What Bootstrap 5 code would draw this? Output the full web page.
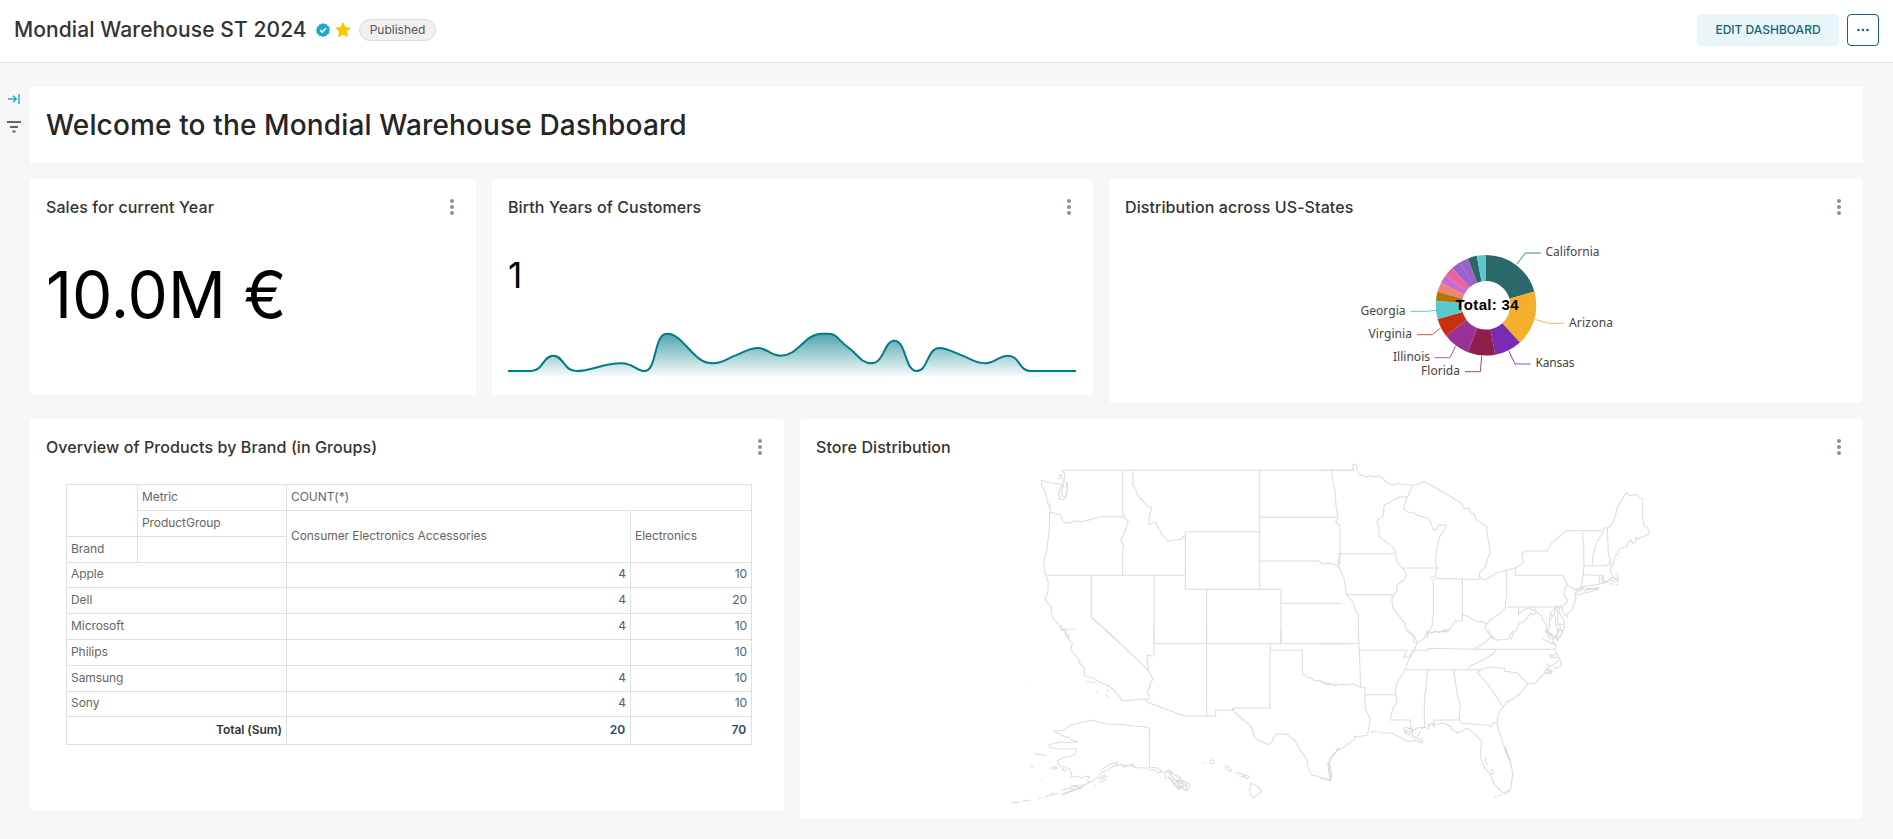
<!DOCTYPE html>
<html lang="en">
<head>
<meta charset="utf-8">
<meta name="viewport" content="width=device-width, initial-scale=1">
<title>Mondial Warehouse ST 2024</title>
<link href="https://cdn.jsdelivr.net/npm/bootstrap@5.3.0/dist/css/bootstrap.min.css" rel="stylesheet">
<style>
body{font-family:Inter,"Liberation Sans",sans-serif;background:#f7f7f7;color:#333;height:839px;overflow:hidden}
.topbar{height:63px;border-bottom:1px solid #e0e0e0;padding:0 14px 2px}
.topbar h1{font-size:21px;font-weight:500;line-height:28px;letter-spacing:.09px}
.status{font-size:12px;line-height:20px;height:22px;padding:0 10px;background:#f0f0f0;border:1px solid #dcdcdc;color:#555}
.btn-edit{width:142px;height:32px;padding:0;font-size:12px;font-weight:500;background:#e9f6f9;color:#156378;border:0;border-radius:4px}
.btn-more{width:32px;height:32px;padding:0;border:1px solid #156378;border-radius:4px}
.rail{width:30px;padding:6px 0 0 7px;margin-top:24px;gap:16px}
.board{padding:24px 30px 0 0;gap:16px}
.panel{background:#fff;border-radius:4px;min-width:0}
.banner{height:76px;background:#fff;padding:0 16px}
.banner h2{font-size:28px;font-weight:500;line-height:76px;color:#252525;letter-spacing:.14px}
.w-sales{width:446px;height:216px}.w-birth{width:601px;height:216px}.w-states{height:224px}
.w-brand{width:754px;height:392px}.w-map{height:400px}
.phead{height:41px;padding:15px 22px 0 16px}
.phead h3{font-size:16px;font-weight:500;line-height:26px;letter-spacing:.09px}
.big{font-size:64px;line-height:70px;color:#000;padding:40px 16px 0}
.mid{font-size:35px;line-height:40px;color:#000;padding:35px 16px 0}
.pivot{width:685px;table-layout:fixed;border-collapse:collapse;font-size:12px;line-height:16px;letter-spacing:-.06px;margin:24px 0 0 36px}
.pivot td,.pivot th{border:1px solid #e0e0e0;padding:0 4px 2px;font-weight:400;vertical-align:middle;color:#666}
.pivot tr{height:26px}.pivot tr.low{height:25px}
.pivot td{text-align:right;color:#4d607c}
.pivot tr.sum{height:28px}.pivot tr.sum td{font-weight:600;color:#2a4a66;padding-right:5px}.pivot tr.sum th{font-weight:600;color:#333}
.map g{fill:none;stroke:#dcdcdc;stroke-width:3.2;stroke-linejoin:round}
.lbl{font:12px "Noto Sans","Open Sans",sans-serif;fill:#444}
.total{font:bold 15px "Liberation Sans",sans-serif}
</style>
</head>
<body>
<svg class="d-none"><symbol id="kebab" viewBox="0 0 4 16"><g fill="#879399"><circle cx="2" cy="2" r="2"/><circle cx="2" cy="8" r="2"/><circle cx="2" cy="14" r="2"/></g></symbol></svg>
<header class="topbar bg-white d-flex align-items-center">
  <h1 class="mb-0 text-nowrap">Mondial Warehouse ST 2024</h1>
  <svg class="ms-2" width="16" height="16" viewBox="0 0 16 16"><path fill="#20a7c9" d="M8 1l1.700 1.200 2-.2.8 1.900 1.900.8-.2 2L15.200 8l-1.200 1.500.2 2-1.900.8-.8 1.900-2-.2L8 15.200 6.300 14l-2 .2-.8-1.900-1.900-.8.2-2L.8 8 2 6.700l-.2-2 1.900-.8.8-1.900 2 .2z"/><path d="M5.200 8.100l2 2 3.700-3.800" fill="none" stroke="#fff" stroke-width="1.500"/></svg>
  <svg class="ms-1" width="16" height="16" viewBox="0 0 16 16"><path fill="#fcc700" stroke="#fcc700" stroke-linejoin="round" d="M8 .9l2.100 4.500 4.900.7-3.500 3.500.8 5L8 12.200l-4.300 2.400.8-5L1 6.100l4.900-.7z"/></svg>
  <span class="status rounded-pill ms-2">Published</span>
  <div class="ms-auto d-flex gap-2">
    <button class="btn btn-edit">EDIT DASHBOARD</button>
    <button class="btn btn-more d-flex align-items-center justify-content-center"><svg width="12" height="4" viewBox="0 0 12 4" fill="#156378"><circle cx="1.500" cy="2" r="1.300"/><circle cx="6" cy="2" r="1.300"/><circle cx="10.500" cy="2" r="1.300"/></svg></button>
  </div>
</header>
<main class="d-flex">
  <aside class="rail flex-shrink-0 d-flex flex-column">
    <svg width="14" height="12" viewBox="0 0 14 12" fill="none" stroke="#20a7c9" stroke-width="1.400"><path d="M1 6h8M6 2.800L9.200 6 6 9.200M12 1v10"/></svg>
    <svg width="14" height="12" viewBox="0 0 14 12" fill="none" stroke="#666" stroke-width="2"><path d="M0 1h14M3 6h8M5.500 10.500h3"/></svg>
  </aside>
  <div class="board flex-grow-1 d-flex flex-column">
    <section class="banner"><h2 class="mb-0">Welcome to the Mondial Warehouse Dashboard</h2></section>
    <div class="d-flex gap-3 align-items-start">
      <section class="panel w-sales">
        <div class="phead d-flex justify-content-between align-items-center"><h3 class="mb-0">Sales for current Year</h3><svg width="4" height="16"><use href="#kebab"/></svg></div>
        <div class="big">10.0M €</div>
      </section>
      <section class="panel w-birth">
        <div class="phead d-flex justify-content-between align-items-center"><h3 class="mb-0">Birth Years of Customers</h3><svg width="4" height="16"><use href="#kebab"/></svg></div>
        <div class="mid">1</div>
        <svg class="d-block ms-3" width="568" height="83" viewBox="69 345 1391 249" preserveAspectRatio="none">
          <defs><linearGradient id="fade" x1="0" y1="459" x2="0" y2="594" gradientUnits="userSpaceOnUse"><stop stop-color="#007b87" stop-opacity=".7"/><stop offset="1" stop-color="#007b87" stop-opacity="0"/></linearGradient></defs>
          <path fill="url(#fade)" d="M69 573H125C155 573 155 527 180 527S205 573 236 573C275 573 300 550 347 550C375 550 385 573 403 573C435 573 425 459 458 459C500 459 520 550 570 550C595 550 605 536 625 527C650 515 660 504 681 504C705 504 710 527 737 527C780 527 795 459 838 459H855C875 459 880 485 904 504C925 523 935 550 959 550C990 550 990 482 1015 482C1045 482 1040 573 1070 573C1098 573 1095 504 1126 504C1145 504 1162 518 1182 527S1215 550 1238 550C1262 550 1270 527 1293 527C1322 527 1320 573 1348 573H1460V594H69z"/>
          <path fill="none" stroke="#007b87" stroke-width="2" vector-effect="non-scaling-stroke" d="M69 573H125C155 573 155 527 180 527S205 573 236 573C275 573 300 550 347 550C375 550 385 573 403 573C435 573 425 461 458 461C500 461 520 550 570 550C595 550 605 536 625 527C650 515 660 504 681 504C705 504 710 527 737 527C780 527 795 461 838 461H855C875 461 880 485 904 504C925 523 935 550 959 550C990 550 990 482 1015 482C1045 482 1040 573 1070 573C1098 573 1095 504 1126 504C1145 504 1162 518 1182 527S1215 550 1238 550C1262 550 1270 527 1293 527C1322 527 1320 573 1348 573H1460"/>
        </svg>
      </section>
      <section class="panel w-states flex-grow-1">
        <div class="phead d-flex justify-content-between align-items-center"><h3 class="mb-0">Distribution across US-States</h3><svg width="4" height="16"><use href="#kebab"/></svg></div>
        <svg class="d-block" width="754" height="183" viewBox="1109 220 754 183">
          <g transform="translate(1486 305.300) rotate(-90)" fill="none" stroke-width="26">
            <circle r="37.300" pathLength="34" stroke="#2a686a" stroke-dasharray="7 27"/>
            <circle r="37.300" pathLength="34" stroke="#f4b02a" stroke-dasharray="6 28" stroke-dashoffset="-7"/>
            <circle r="37.300" pathLength="34" stroke="#7a2bb1" stroke-dasharray="3 31" stroke-dashoffset="-13"/>
            <circle r="37.300" pathLength="34" stroke="#901e4d" stroke-dasharray="3 31" stroke-dashoffset="-16"/>
            <circle r="37.300" pathLength="34" stroke="#9c3195" stroke-dasharray="3 31" stroke-dashoffset="-19"/>
            <circle r="37.300" pathLength="34" stroke="#c5300f" stroke-dasharray="2 32" stroke-dashoffset="-22"/>
            <circle r="37.300" pathLength="34" stroke="#5ac9cd" stroke-dasharray="2 32" stroke-dashoffset="-24"/>
            <circle r="37.300" pathLength="34" stroke="#b37400" stroke-dasharray="1 33" stroke-dashoffset="-26"/>
            <circle r="37.300" pathLength="34" stroke="#f1836c" stroke-dasharray="1 33" stroke-dashoffset="-27"/>
            <circle r="37.300" pathLength="34" stroke="#c96bcc" stroke-dasharray="1 33" stroke-dashoffset="-28"/>
            <circle r="37.300" pathLength="34" stroke="#e8649f" stroke-dasharray="1 33" stroke-dashoffset="-29"/>
            <circle r="37.300" pathLength="34" stroke="#9b62cc" stroke-dasharray="2 32" stroke-dashoffset="-30"/>
            <circle r="37.300" pathLength="34" stroke="#b184d8" stroke-dasharray=".06 33.940" stroke-dashoffset="-30.970"/>
            <circle r="37.300" pathLength="34" stroke="#2a686a" stroke-dasharray="1 33" stroke-dashoffset="-32"/>
            <circle r="37.300" pathLength="34" stroke="#5ac9cd" stroke-dasharray="1 33" stroke-dashoffset="-16" transform="rotate(180)"/>
          </g>
          <g fill="none" transform="translate(1330 220) scale(.33333)" stroke-width="3">
            <path stroke="#4b7f81" d="M560 133l26-34h46"/><path stroke="#f4b84a" d="M614 298l42 12h46"/><path stroke="#8a48bf" d="M536 392l19 40h46"/><path stroke="#a84871" d="M455 407l-4 48h-46"/><path stroke="#b457ae" d="M377 378l-17 35h-46"/><path stroke="#cf5539" d="M332 324l-25 20h-46"/><path stroke="#5ac9cd" d="M318 271l-28 3h-48"/>
          </g>
          <g class="lbl"><text x="1545.500" y="256" textLength="54">California</text><text x="1569" y="327" textLength="44">Arizona</text><text x="1535.500" y="367" textLength="39">Kansas</text><text x="1421" y="375" textLength="39">Florida</text><text x="1393" y="361" textLength="37">Illinois</text><text x="1368.500" y="338" textLength="43.500">Virginia</text><text x="1360.500" y="315" textLength="45">Georgia</text></g>
          <text class="total" x="1455.500" y="310" textLength="63" fill="#000">Total: 34</text>
        </svg>
      </section>
    </div>
    <div class="d-flex gap-3 align-items-start">
      <section class="panel w-brand">
        <div class="phead d-flex justify-content-between align-items-center"><h3 class="mb-0">Overview of Products by Brand (in Groups)</h3><svg width="4" height="16"><use href="#kebab"/></svg></div>
        <table class="pivot">
          <colgroup><col style="width:71px"><col style="width:149px"><col style="width:344px"><col style="width:121px"></colgroup>
          <tr><th rowspan="2"></th><th>Metric</th><th colspan="2">COUNT(*)</th></tr>
          <tr><th>ProductGroup</th><th rowspan="2">Consumer Electronics Accessories</th><th rowspan="2">Electronics</th></tr>
          <tr><th>Brand</th><th></th></tr>
          <tr class="low"><th colspan="2">Apple</th><td>4</td><td>10</td></tr>
          <tr><th colspan="2">Dell</th><td>4</td><td>20</td></tr>
          <tr><th colspan="2">Microsoft</th><td>4</td><td>10</td></tr>
          <tr><th colspan="2">Philips</th><td></td><td>10</td></tr>
          <tr><th colspan="2">Samsung</th><td>4</td><td>10</td></tr>
          <tr class="low"><th colspan="2">Sony</th><td>4</td><td>10</td></tr>
          <tr class="sum"><th colspan="2" class="text-end">Total (Sum)</th><td>20</td><td>70</td></tr>
        </table>
      </section>
      <section class="panel w-map flex-grow-1">
        <div class="phead d-flex justify-content-between align-items-center"><h3 class="mb-0">Store Distribution</h3><svg width="4" height="16"><use href="#kebab"/></svg></div>
        <svg class="map d-block" width="1063" height="359" viewBox="800 460 1063 359">
          <!-- north-west -->
          <g transform="translate(980 440) scale(.33333)">
            <path d="M247 91H1121M247 91l8 12-3 18-6 12-30-3-31-9v16l9 14 7 25 4 18 7 2-5 7 6 8-5 10 1 8 2 6M235 110l8-7 4 6-4 7-8-2M250 121l7 8 5 4-1 20-3 18-8 8-14-3 4-4-6-8 6-18 8-12 3 4-7 14 4 16 8 3 6-17-3-18 4-10"/>
            <path d="M208 218h14l4 5h13l7 11 4 13 18 3 14-8 16 3 22-3 20-6 24-6h67M428 91v121l3 18 14 15-9 25-15 34 10 9-3 20v73M459 91v45l9 14 3 14 16 17 14 17 13 5-3 17-5 20v11l9 1 11-7 6 13 10 16v7l14 11 7 12 20-4 22-3 4-8 8 10"/>
            <path d="M209 218l-1 49-4 32-3 32-8 26-2 17 6 32M199 406H616M200 407l2 13 3 7-2 33-8 12 2 10 16 18 3 26 3 9 21 22 3 13 9 2M245 572l12-4h28M257 568l-2 12 9 13 4 1M616 406V275H839M839 91V448M616 406v42h287V610M680 448V610M522 406V610M334 406V531L410 600M839 232h235M839 363h176l14 9 23-3 17 7 11 11M903 490h180M1055 91l2 23 8 40 3 42 6 36-7 14 13 12v112l-5 4 5-17"/>
          </g>
          <!-- north-east -->
          <g transform="translate(1320 440) scale(.33333)">
            <path d="M0 91h99V73h9l7 29 26 9 8-4 19 4 10-3 14 11 11 10 14 7 12-5 32 3 17 2 18-3 17-9 111 65 9 18 9-4 7 6 2 10 10 2 6 9-1 8 33 21 5 38 7 42-10 21-5 21-17 17-1 13 8 6 9 3 37-22 29-8 29-8 22-14-7-26 10-9h66l14-23 43-38h109"/>
            <path d="M278 136l-16 35h-24l-46 25-2 32-13 8-6 12 5 10 1 31 27 22 19 14 3 19 6 22 11 14 10 11 7 14-9 16-17 11-6 12 4 8-10 13-6 7v13l3 19 31 40 7 7-3 7 12 18 20 16 4 13M54 341h168M60 341l-7 24 5 18 15 36 6 44 22 25 3 18 11 18v80M79 464h134l8 4M244 384h112M262 171l-12 32 9 12 24 4 14 9 29 7 9 20 3 13 9 3 10-16 22 1-3 8-17 27-6 21-4 31-2 19 3 25-5 24h-13M345 416h83M427 418h49l6-10M340 416v110l-4 9 4 14-13 26-6 19M427 418v124l-22 1-8 14-10 13-11 6-10-4-11 6-9-5-10 6-12-3-7 8M427 526l13 1 11 8 20 9h18l10 9 9-12 18-11 13-9 16-17 5-40V391M499 553l-5 12 9 9 3 9 17 17M562 501h156l4-5M586 384v22h142l15 30 27 15 6 2M743 436l-8 8-4 20 9 12 4 9-16 12-12 3M726 498l2 17 14 17-2-10 15-10 13-37-4-12 6-8M789 275l-1 20 3 16 1 65-3 30-5 33-11 13M848 275l-1 7-15 20-12 38-4 34M848 275l5-12 12 1 7-6 13-24 5-26 10-20 20-30 8 9 21-4 19 15v62l6 20 8 1 7 19-9 6-19 7-8 7-5-8-3 16-8 1-5-11-8 9-2 12-23 7-6 15-8 8-6 20-2 8"/>
            <path d="M862 264l3 80 7 18-3 6-9 9h-69M786 404l53 2h10l4 23 11-4 10-13 10 5 11-6-1 12-10 3-12-7-14 6-28 9-40 6-26 10M839 406v27M845 406l5 28M869 370l6 10-5 13 9 14 5 10 12 4M896 407l-6-6-4 2M869 433l11-2M888 434l8-2M763 465l10-12 18-6 46-4-2 5-29 9-39 8M836 446l-24 2-21 6M792 440l-11 13"/>
            <path d="M596 501v23l7-9 13-8 11-4 10 9 8-5 5 9 16 11v10l17 22-3 7 10 14 12 9 6-2 2 10M648 512l-6 14-11-7-8 13-13 14-12 3-8 20-9 9-7 22M713 498v55h19M690 600l-6-17-8-10 10-5 4-10-2-20 4-22 12-10 5-9-4 16-3 12 6 10-3 16 8 10-3 22-7 15M721 502l-6 13 9 13 9 13 1 16-8 22-10 13-6 10M712 568l12 5-5-18M692 522l6 5-5 12"/>
          </g>
          <!-- south-west -->
          <g transform="translate(980 630) scale(.33333)">
            <path d="M375 -3L505 121M522 0v77l-10 1-11-4 4 48 5 11 10 14-9 11-2 15-6 11 5 12v10l-9 3 1 7 113 42h94v-17h50l5-7h108V61h97v73l10 1 7 8 10 1 11 10 10-3 12 4 4 6 11-4 9 6h16M522 41h578M680 0v258M903 0v41M871 41v20M498 207l-73 6-7-14-14-16-22-18-24-8-20-14-24-4-1-25-12-12-8-18-21-25 5-20-11-12-9-13 2-12-12-5-9-12M268 10l-3 12-8-10M319 156l10-2 6 4 12-1M348 184l3 3M379 179l8 4M377 195l8 8M132 170h2"/>
            <path d="M757 233l7 13 19 18 25 20 10 14 3 20 12 11 32 15 11-10 5-14 12-9 28 2 26 22 16 29 18 24 2 20 11 26 61 16M1055 452l-6-5-3-42 11-27 21-22M1057 446l-7-42-12-4"/>
            <path d="M508 295l-16-5-31-2-40-5-40-1-22-5-23-6-15 3-24 5-25 6-21 16-29 3 8 4 22 11 16 4 3 6 22 7-21 2-32-2-33 8 3 8 19 4 46 1 13-3-1 20-18 5-20 4-18 10 9 16 16 4-9 6 7 5 14-10 6 15v13l14-3 16 4 15-4 10 2-7 10 6 4-19 14-24 12-17 6-24 9M508 295v119M508 414l-37-1-24-8-11 6-13-7-20 3-15 9-24 13-12 14-22 13-31 17-29 11-25 9M361 422l27-18 25-7-3 8-15 6M425 401l4 10 10-6 14 2 3-7 10 14M378 433l-22 13M384 438l-25 10M380 448l-25 11M510 412l18 1 18 11-10 4-17-10-9 3M540 422l15 7 12-9 17 14 10 2 19 21 16 6-3 16-9 4-12-16-9 13-18-21-7-13-15-3-1-13M560 422l50 57M567 420l14 28 32 17M575 425l46 48M565 438l36 39M588 451l32 6-2 22M599 460l-3 18 20-14M580 455l19 23M270 468l40-4M245 481l45-12 15 7-32 2M236 490l-23 6M221 487l-24 15M188 504l-4 2M176 507h4M128 513l9-2 6 2 10-1M95 516l10 2 13-3M151 408l9 4M164 370l8 4 8-2 10 4 10-1M213 414l11-4 10 4-9 4zM182 449l3 3M189 457h2M345 467l3-2"/>
            <path d="M689 393l7-4 8 5-4 7-9-1zM673 401l5-3M737 409l9 1 8 9-2 5-13-6zM767 428l14 1M777 436l7 5M781 430l14 8-8 2M791 435l9-1 8 8-6 4-11-5zM813 459l20 10 12 16-26 19-7-8-4-15 4-12z"/>
          </g>
          <!-- south-east -->
          <g transform="translate(1320 630) scale(.33333)">
            <path d="M0 41h116V0M117 40v21h144l-2 8-9 12h21l10-15 11-30-2 3M118 61l4 110M0 153l10 4 11 8 9-4 17 6 12-4 23 2 14-4 9 3 13 8h17v61l16 35-8 44M135 194h91M292 38l20-12 10-21-3-6M258 0l22 15 2 22 10 2M275 61h49v-6l138 3h244M527 60l-8 12-36 21-32 15-9 12M257 119h228M462 56l24-12 31-26 14 13 35-4 8-17 8-10M505 0l12 18M276 60l-9 28-14 36-23 36-4 30 5 25-14 26-6 29h60l1 18 6 12M323 121l-10 90v83M402 120l10 76 9 28-3 27v19l7 10 83 6 5 6 5-14 14 2M341 270h77M341 270l4 22M322 6l14 2 12-4 14 3 10-7 18 1"/>
            <path d="M472 128l14-11 23-6 44 4v9l38 4 32 33M472 128l7 7 12 15 15 17 10 14 16 23 16 28-14 23-3 27 11 37 12 37 18 43 6 29-4 38-6 18-20 4-11-11-15-15-7-18-8-16-13-14-10-24-2-28 3-27-15-18-27-22-30 14-11-7-12-13-21-9-15 3-18-2-14 5M341 292l-4-12-7 2-6 15-8-5-23 1-14 8-4-5-17-4-7 7 6 8 16-2-6 10-13-5 9-11 7-5 8 12-1 16 11-2 7 6 13 6-1 7-23-9-9 5-15-2-16-10-15-6-8-7-45-2-9-6-10 5-7-2M300 304l-5 14M303 298l6-4M144 315l-35 6-6-3 1 10-43 31-9-4-7 18-14 10-6 18-1 13 8 39-19-5-13-2M27 402l5 42M37 374l22-17"/>
            <path d="M548 232l12-15 24-14 19-14 19-27 24-2 11-14 13-13 17-7 9-5-16-4M692 131l-20-6 5-4 22 5M724 104l-3 4-18 8M708 57l2 14 13 25v14M711 70l-14 8-8-4 4 9 12-2 8 6M677 100l11 8-4 7-10-2M688 108l12-3 14-13M691 126l3 5-7 2M705 58l3-13-8-8-6-20-11-6-7-10M678 0l20 18 5 11M668 27l30 15M690 38l13 5M712 32l-5-10 6-10 5-15M708 23l13-3 9-19M492 380l6 5-3 10 9 10M512 417l7 5-6 11 10-5M556 350l15 43 2 16M553 354l13 34M567 478l-4 9-12 7M544 494l-8 4M530 499l-8 3"/>
          </g>
        </svg>
      </section>
    </div>
  </div>
</main>
<script src="https://cdn.jsdelivr.net/npm/bootstrap@5.3.0/dist/js/bootstrap.bundle.min.js"></script>
</body>
</html>
